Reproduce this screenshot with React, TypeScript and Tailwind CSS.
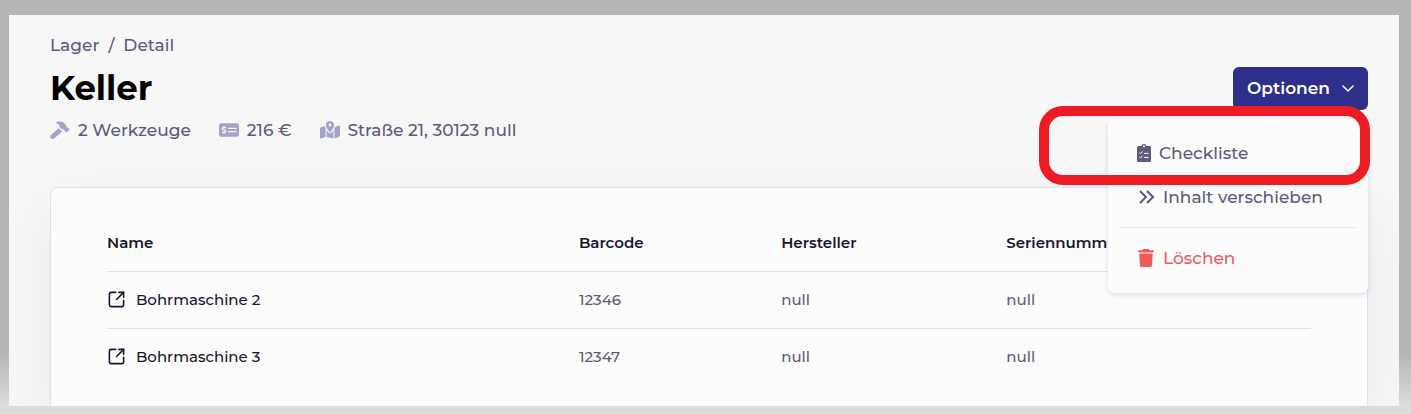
import { useState } from 'react';
import { FaMapLocationDot, FaMoneyCheckDollar, FaTrash } from 'react-icons/fa6';
import { SquareArrowOutUpRight } from 'lucide-react';

const tools = [
  { name: 'Bohrmaschine 2', barcode: '12346', vendor: 'null', serial: 'null' },
  { name: 'Bohrmaschine 3', barcode: '12347', vendor: 'null', serial: 'null' },
];

function HammerIcon() {
  return (
    <svg viewBox="0 0 20 18" className="h-[18px] w-5 shrink-0 text-[#a3a3c6]" fill="currentColor" aria-hidden="true">
      <path d="M6.200 1.600C8 .2 12 .2 13.600 1.600L16 4C16.500 4.600 16.600 5.400 16.500 6.200L17.600 6.400L19.700 8.400L16.300 11.600L14.200 9.600V8.600C13 8.700 12 8.500 11 7.500L9.500 6C9.500 4 8.500 2.600 6.200 2.300Z" />
      <path d="M8.800 7.200L12.200 10.400L4.400 17.200C3.300 18.200 1.600 18.200 .8 17.200C-.1 16.200 0 14.800 1 13.900Z" />
    </svg>
  );
}

function ChecklistIcon() {
  return (
    <svg viewBox="0 0 14 18" className="h-[18px] w-3.5 shrink-0" aria-hidden="true">
      <path
        fill="currentColor"
        fillRule="evenodd"
        d="M4.400 2A2.700 2.700 0 0 1 9.600 2H12.400A1.600 1.600 0 0 1 14 3.600V16.400A1.600 1.600 0 0 1 12.400 18H1.600A1.600 1.600 0 0 1 0 16.400V3.600A1.600 1.600 0 0 1 1.600 2ZM7 1.200A1 1 0 1 0 7 3.200A1 1 0 1 0 7 1.200Z"
      />
      <path
        d="M2.500 8.600l1 1 2-2.200M2.500 13l1 1 2-2.200M7 9.400h4.500M7 13.400h4.500"
        fill="none"
        stroke="#fcfcfc"
        strokeWidth="1"
      />
    </svg>
  );
}

function MoveIcon() {
  return (
    <svg viewBox="0 0 18 18" className="size-[18px] shrink-0" aria-hidden="true">
      <path
        d="M3 3L9 9L3 15M10 3L16 9L10 15"
        fill="none"
        stroke="currentColor"
        strokeWidth="2"
      />
    </svg>
  );
}

function CaretIcon() {
  return (
    <svg viewBox="0 0 16 16" className="size-4 shrink-0" aria-hidden="true">
      <path
        d="M3 5L8 10L13 5"
        fill="none"
        stroke="currentColor"
        strokeWidth="1.500"
        strokeLinecap="round"
        strokeLinejoin="round"
      />
    </svg>
  );
}

function OptionsMenu() {
  const [open, setOpen] = useState(true);

  return (
    <div className="relative">
      <button
        type="button"
        aria-expanded={open}
        onClick={() => setOpen(!open)}
        className="flex h-[43px] items-center gap-2.5 rounded-md bg-[#2f2e8b] pr-3 pl-3.5 text-[17px] font-semibold text-white"
      >
        Optionen
        <CaretIcon />
      </button>

      {open && (
        <div className="absolute top-[52px] right-0 z-10 w-[260px] rounded-md bg-[#fcfcfc] px-[13px] pt-3 pb-[13px] text-[17px] leading-6 font-medium shadow-[0_2px_5px_rgba(40,40,90,0.14)]">
          <a href="#checkliste" className="flex h-11 items-center gap-2 px-4">
            <ChecklistIcon />
            Checkliste
          </a>
          <a href="#verschieben" className="flex h-11 items-center gap-2 px-4">
            <MoveIcon />
            Inhalt verschieben
          </a>
          <hr className="my-2 border-[#dfdef2]" />
          <a href="#loeschen" className="flex h-11 items-center gap-2 px-4 text-[#ef5b5b]">
            <FaTrash size={18} />
            Löschen
          </a>
        </div>
      )}

      {/* Highlight around the checklist entry */}
      <div className="pointer-events-none absolute top-[39px] -right-0.5 z-20 h-[79px] w-[331px] rounded-3xl border-10 border-[#ed1c24]" />
    </div>
  );
}

export default function App() {
  return (
    <div className="bg-[linear-gradient(to_top,#dedfde_0px,#dadbda_10px,#b5b7b6_60px)] pt-[15px] pr-3 pb-2 pl-[9px] font-['Montserrat','Inter',sans-serif] text-[#5b5b7b]">
      <main className="overflow-hidden bg-[#f7f7f7] pt-[18px] pr-[31px] pl-[41px]">
        <nav className="flex gap-[9px] text-[17px] leading-6 font-medium">
          <a href="#lager">Lager</a>
          <span>/</span>
          <span>Detail</span>
        </nav>

        <header className="mt-2.5 flex items-start justify-between">
          <div>
            <h1 className="text-[34px] leading-[42px] font-bold text-black">Keller</h1>
            <ul className="mt-[9px] flex gap-7 text-[17px] leading-6 font-medium">
              <li className="flex items-center gap-2">
                <HammerIcon />2 Werkzeuge
              </li>
              <li className="flex items-center gap-2">
                <FaMoneyCheckDollar size={20} className="text-[#a3a3c6]" />
                216 €
              </li>
              <li className="flex items-center gap-2">
                <FaMapLocationDot size={20} className="text-[#a3a3c6]" />
                Straße 21, 30123 null
              </li>
            </ul>
          </div>
          <OptionsMenu />
        </header>

        <section className="mt-[45px] rounded-t-lg border border-b-0 border-[#dfdef2] bg-[#fcfcfc] px-14 pt-7 pb-[21px] shadow-[0_20px_60px_rgba(40,40,90,0.06)]">
          <table className="w-full table-fixed text-left text-[15px] leading-6 font-medium">
            <thead className="text-[#16162e]">
              <tr className="h-[55px] border-b border-[#dfdef2]">
                <th className="w-[39.2%] font-semibold">Name</th>
                <th className="w-[16.8%] font-semibold">Barcode</th>
                <th className="w-[18.7%] font-semibold">Hersteller</th>
                <th className="font-semibold">Seriennummer</th>
              </tr>
            </thead>
            <tbody>
              {tools.map((tool) => (
                <tr key={tool.barcode} className="h-[57px] border-b border-[#dfdef2] last:border-b-0">
                  <td>
                    <a href={`#${tool.barcode}`} className="flex items-center gap-2.5 text-[#16162e]">
                      <SquareArrowOutUpRight size={19} strokeWidth={2} />
                      {tool.name}
                    </a>
                  </td>
                  <td>{tool.barcode}</td>
                  <td>{tool.vendor}</td>
                  <td>{tool.serial}</td>
                </tr>
              ))}
            </tbody>
          </table>
        </section>
      </main>
    </div>
  );
}
